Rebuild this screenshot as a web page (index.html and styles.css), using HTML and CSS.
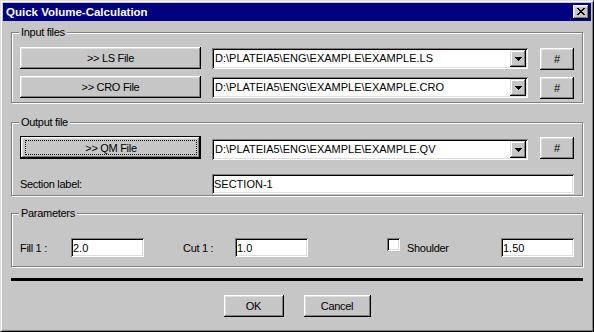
FILE: index.html
```html
<!DOCTYPE html>
<html lang="en">
<head>
  <meta charset="UTF-8" />
  <title>Quick Volume-Calculation</title>
  <link rel="stylesheet" href="styles.css">
</head>
<body>
  <div class="window">
    <div class="titlebar">
      <span class="title">Quick Volume-Calculation</span>
      <button class="close" aria-label="Close">
        <svg width="8" height="7" viewBox="0 0 8 7" shape-rendering="crispEdges">
          <path d="M0 0h2v1H0zM6 0h2v1H6zM1 1h2v1H1zM5 1h2v1H5zM2 2h4v1H2zM3 3h2v1H3zM2 4h4v1H2zM1 5h2v1H1zM5 5h2v1H5zM0 6h2v1H0zM6 6h2v1H6z" fill="#000"/>
        </svg>
      </button>
    </div>

    <div class="dialog">
      <!-- Input files -->
      <fieldset class="group group-input">
        <legend>Input files</legend>
        <div class="file-row">
          <button class="btn btn-file">&gt;&gt; LS File</button>
          <div class="combo">
            <span class="combo-text">D:\PLATEIA5\ENG\EXAMPLE\EXAMPLE.LS</span>
            <span class="combo-arrow"><svg width="7" height="4" viewBox="0 0 7 4" shape-rendering="crispEdges"><path d="M0 0h7v1H0zM1 1h5v1H1zM2 2h3v1H2zM3 3h1v1H3z" fill="#000"/></svg></span>
          </div>
          <button class="btn btn-hash">#</button>
        </div>
        <div class="file-row">
          <button class="btn btn-file">&gt;&gt; CRO File</button>
          <div class="combo">
            <span class="combo-text">D:\PLATEIA5\ENG\EXAMPLE\EXAMPLE.CRO</span>
            <span class="combo-arrow"><svg width="7" height="4" viewBox="0 0 7 4" shape-rendering="crispEdges"><path d="M0 0h7v1H0zM1 1h5v1H1zM2 2h3v1H2zM3 3h1v1H3z" fill="#000"/></svg></span>
          </div>
          <button class="btn btn-hash">#</button>
        </div>
      </fieldset>

      <!-- Output file -->
      <fieldset class="group group-output">
        <legend>Output file</legend>
        <div class="file-row file-row-out">
          <button class="btn btn-file btn-default"><span class="focus">&gt;&gt; QM File</span></button>
          <div class="combo">
            <span class="combo-text">D:\PLATEIA5\ENG\EXAMPLE\EXAMPLE.QV</span>
            <span class="combo-arrow"><svg width="7" height="4" viewBox="0 0 7 4" shape-rendering="crispEdges"><path d="M0 0h7v1H0zM1 1h5v1H1zM2 2h3v1H2zM3 3h1v1H3z" fill="#000"/></svg></span>
          </div>
          <button class="btn btn-hash">#</button>
        </div>
        <div class="label-row">
          <span class="label label-section">Section label:</span>
          <input class="field field-wide" type="text" value="SECTION-1" />
        </div>
      </fieldset>

      <!-- Parameters -->
      <fieldset class="group group-params">
        <legend>Parameters</legend>
        <div class="param-row">
          <span class="label label-fill">Fill 1 :</span>
          <input class="field field-num" type="text" value="2.0" />
          <span class="label label-cut">Cut 1 :</span>
          <input class="field field-num" type="text" value="1.0" />
          <span class="check"></span>
          <span class="label label-check">Shoulder</span>
          <input class="field field-num field-last" type="text" value="1.50" />
        </div>
      </fieldset>

      <div class="separator"></div>

      <div class="actions">
        <button class="btn btn-ok">OK</button>
        <button class="btn btn-cancel">Cancel</button>
      </div>
    </div>
  </div>
</body>
</html>
```

FILE: styles.css
```css
body {
  margin: 0;
  background-color: #c6c6c6;
  font-family: 'Liberation Sans', Arial, sans-serif;
  font-size: 11px;
  letter-spacing: -0.3px;
  color: #000;
}
.window {
  width: 594px;
  height: 332px;
  box-sizing: border-box;
  border: 1px solid;
  border-color: #dfdfdf #000 #000 #dfdfdf;
  box-shadow: inset 1px 1px #fff, inset -1px -1px #808080;
  padding: 2px;
  background-color: #c6c6c6;
}
.titlebar {
  height: 18px;
  display: flex;
  align-items: center;
  padding: 0 2px 0 3px;
  background-color: #000080;
  color: #fff;
}
.title {
  font-weight: bold;
  font-size: 11.5px;
  letter-spacing: 0;
}
.close {
  margin-left: auto;
  width: 16px;
  height: 14px;
  padding: 0;
  border: none;
  display: flex;
  align-items: center;
  justify-content: center;
  background-color: #c6c6c6;
  box-shadow: inset -1px -1px #000, inset 1px 1px #fff, inset -2px -2px #808080, inset 2px 2px #dfdfdf;
}
.close svg {
  display: block;
  margin: 0 0 1px 0;
}
.dialog {
  padding: 0 8px;
}

/* group boxes */
.group {
  margin: 0;
  padding: 8px 8px 3px 8px;
  border: 1px solid #808080;
  box-shadow: inset 1px 1px #fff, 1px 1px #fff;
  min-inline-size: 0;
}
.group legend {
  padding: 0 2px;
  margin-left: -1px;
  line-height: 13px;
  background-color: #c6c6c6;
}
.group-input {
  margin-top: 5px;
}
.group-output {
  margin-top: 13px;
  padding: 7px 8px 1px 8px;
}
.group-params {
  margin-top: 11px;
  padding: 18px 8px 9px 8px;
}

/* buttons */
.btn {
  height: 22px;
  padding: 0;
  border: none;
  font-family: inherit;
  font-size: 11px;
  letter-spacing: -0.3px;
  color: #000;
  background-color: #c6c6c6;
  box-shadow: inset -1px -1px #000, inset 1px 1px #fff, inset -2px -2px #808080, inset 2px 2px #dfdfdf;
}
.btn-default {
  display: flex;
  box-shadow: inset 0 0 0 1px #000, inset -2px -2px #000, inset 2px 2px #fff, inset -3px -3px #808080, inset 3px 3px #dfdfdf;
}
.btn-default .focus {
  flex: 1;
  margin: 4px 4px 4px 5px;
  border: 1px dotted #000;
  display: flex;
  align-items: center;
  justify-content: center;
}

/* file rows */
.file-row {
  display: flex;
  align-items: flex-start;
}
.file-row + .file-row {
  margin-top: 6px;
}
.btn-file {
  width: 181px;
}
.file-row-out .btn-file {
  height: 23px;
}
.combo {
  flex: 1;
  height: 21px;
  margin: 1px 0 0 11px;
  box-sizing: border-box;
  padding: 2px;
  display: flex;
  background-color: #fff;
  box-shadow: inset 1px 1px #808080, inset -1px -1px #fff, inset 2px 2px #000, inset -2px -2px #dfdfdf;
}
.file-row-out .combo {
  margin-top: 3px;
}
.combo-text {
  flex: 1;
  padding-left: 1px;
  line-height: 17px;
  letter-spacing: 0;
  white-space: nowrap;
}
.combo-arrow {
  width: 16px;
  display: flex;
  align-items: center;
  justify-content: center;
  background-color: #c6c6c6;
  box-shadow: inset -1px -1px #000, inset 1px 1px #dfdfdf, inset -2px -2px #808080, inset 2px 2px #fff;
}
.btn-hash {
  width: 34px;
  margin: 1px 0 0 12px;
  letter-spacing: 0;
}

/* edit fields */
.field {
  height: 19px;
  box-sizing: border-box;
  padding: 0 2px;
  border: none;
  outline: none;
  font-family: inherit;
  font-size: 11px;
  letter-spacing: 0;
  color: #000;
  background-color: #fff;
  box-shadow: inset 1px 1px #808080, inset -1px -1px #fff, inset 2px 2px #000, inset -2px -2px #dfdfdf;
}
.label-row {
  display: flex;
  align-items: center;
  margin-top: 14px;
}
.label-section {
  width: 192px;
}
.field-wide {
  flex: 1;
  height: 20px;
}

/* parameters */
.param-row {
  display: flex;
  align-items: center;
}
.label-fill {
  width: 51px;
}
.field-num {
  width: 73px;
}
.label-cut {
  width: 52px;
  margin-left: 39px;
}
.check {
  width: 13px;
  height: 13px;
  margin: 0 7px 0 79px;
  align-self: flex-start;
  box-sizing: border-box;
  background-color: #fff;
  box-shadow: inset 1px 1px #808080, inset -1px -1px #fff, inset 2px 2px #000, inset -2px -2px #dfdfdf;
}
.field-last {
  margin-left: auto;
}

.separator {
  height: 3px;
  margin-top: 11px;
  background-color: #000;
}
.actions {
  display: flex;
  justify-content: center;
  gap: 20px;
  margin-top: 14px;
}
.btn-ok {
  width: 60px;
}
.btn-cancel {
  width: 67px;
}
```
